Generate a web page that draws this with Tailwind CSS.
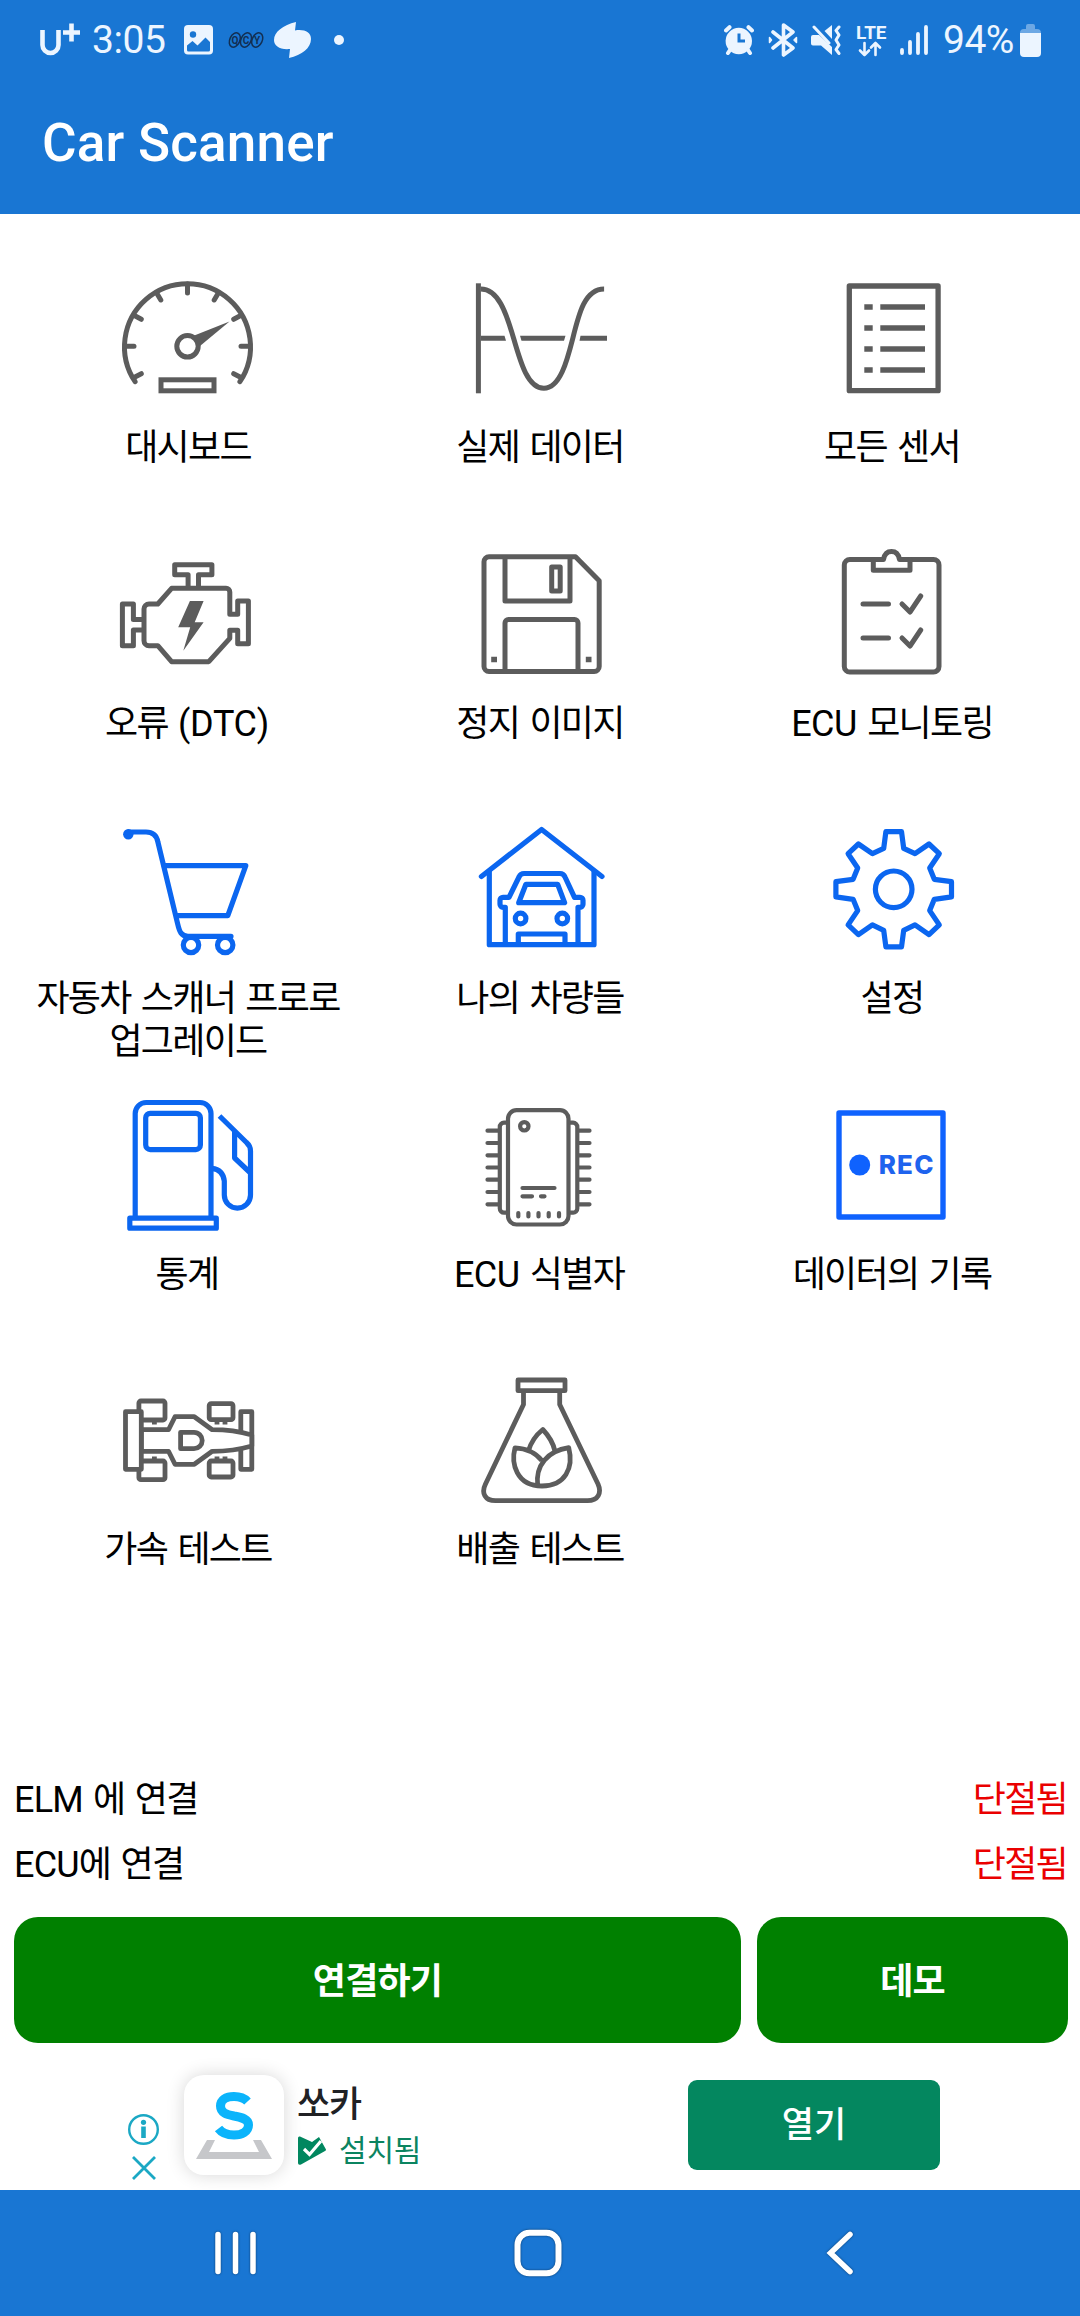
<!DOCTYPE html>
<html lang="ko">
<head>
  <meta charset="UTF-8" />
  <meta name="viewport" content="width=device-width, initial-scale=1.0"/>
  <title>Car Scanner</title>
  <script src="https://cdn.jsdelivr.net/npm/@tailwindcss/browser@4"></script>
</head>
<body class="bg-white text-black font-[Roboto,'Noto_Sans_CJK_KR',sans-serif]">
  <div class="w-[1080px] h-[2316px] flex flex-col overflow-hidden">

    <!-- Header -->
    <header class="h-[214px] shrink-0 bg-[#1976d3] text-white">
      <!-- Status bar -->
      <div class="h-20 pl-10 pr-[39px] flex items-center justify-between text-[#ecf5ff]">
        <div class="flex items-center">
          <svg class="w-[41px] h-9" viewBox="0 0 41 36" fill="none" stroke="currentColor">
            <path d="M2.5 8V23a8 8 0 0 0 16 0V8" stroke-width="4.6"/>
            <path d="M23 10.5H40M31.5 1.5V19.500" stroke-width="4.6"/>
          </svg>
          <span class="ml-[11px] w-[75px] text-[39px] leading-none tracking-[-0.4px]">3:05</span>
          <svg class="ml-[17px] w-[30px] h-[30px]" viewBox="0 0 30 30">
            <rect width="29" height="29.500" rx="4" fill="currentColor"/>
            <circle cx="9" cy="9.500" r="3.200" fill="#1976d3"/>
            <path d="M3 20.500L8.500 16l5 4.500L21.500 12.500L26 17V25a1.500 1.500 0 0 1-1.500 1.500H4.500A1.500 1.500 0 0 1 3 25Z" fill="#1976d3"/>
          </svg>
          <svg class="ml-[14px] w-9 h-[18px]" viewBox="0 0 36 18" fill="none" stroke="#132f52" stroke-width="1.500">
            <ellipse cx="6.800" cy="9" rx="5" ry="7.500" transform="rotate(25 6.800 9)"/>
            <ellipse cx="18" cy="9" rx="5" ry="7.500" transform="rotate(25 18 9)"/>
            <ellipse cx="29.200" cy="9" rx="5" ry="7.500" transform="rotate(25 29.200 9)"/>
            <g fill="#132f52" stroke="none" font-size="10" font-weight="700" text-anchor="middle">
              <text x="7" y="12.500">Q</text><text x="18" y="12.500">C</text><text x="29" y="12.500">Y</text>
            </g>
          </svg>
          <svg class="ml-[10px] w-[38px] h-[36px]" viewBox="0 0 38 36" fill="currentColor">
            <path d="M22 0C9 3 0 10 0 18C0 24 6 28 16 27L15 36C28 33 37 26 37 17C37 10 30 7 21 8.500Z"/>
          </svg>
          <span class="ml-[22px] size-[10px] rounded-full bg-current"></span>
        </div>

        <div class="flex items-center">
          <svg class="w-[30px] h-[30px]" viewBox="0 0 30 30">
            <circle cx="14.800" cy="16" r="13.200" fill="currentColor"/>
            <path d="M2 5.500L5.500 2.200M28 5.500L24.500 2.200M6 25L4 28M24 25L26 28" stroke="currentColor" stroke-width="4" stroke-linecap="round"/>
            <path d="M15 8.500V16H21" stroke="#1976d3" stroke-width="3" fill="none"/>
          </svg>
          <svg class="ml-[14px] w-[30px] h-[34px]" viewBox="0 0 30 34" fill="none" stroke="currentColor" stroke-width="3.600" stroke-linejoin="round" stroke-linecap="round">
            <path d="M5 9L25 25L15.500 32V2L25 9L5 25"/>
            <path d="M1.500 14.500V19.500L3.500 17ZM28.500 14.500V19.500L26 17Z" stroke-width="1.500" fill="currentColor"/>
          </svg>
          <svg class="ml-[13px] w-[30px] h-[30px]" viewBox="0 0 30 30" fill="currentColor">
            <path d="M2 10H8L21 22V30L10 20.500H2A2 2 0 0 1 0 18.500V12A2 2 0 0 1 2 10Z"/>
            <path d="M13.500 6L21 0V14Z"/>
            <path d="M3 2L18 18" stroke="currentColor" stroke-width="3" stroke-linecap="round"/>
            <path d="M28 2L25 5.500L28 10L25 15L28 20L25 24.500L28 28.500" fill="none" stroke="currentColor" stroke-width="3" stroke-linecap="round" stroke-linejoin="round"/>
          </svg>
          <svg class="ml-[14px] w-[34px] h-[34px]" viewBox="0 -2 34 34" fill="none" stroke="currentColor" stroke-width="2.600" stroke-linecap="round" stroke-linejoin="round">
            <text x="1" y="14" font-size="19" font-weight="700" fill="currentColor" stroke="none" textLength="30.500" lengthAdjust="spacingAndGlyphs">LTE</text>
            <path d="M9.500 18V30M5 25.500L9.500 30L14 25.500M20.500 30V18M16 22.500L20.500 18L25 22.500"/>
          </svg>
          <svg class="ml-[11px] w-[28px] h-[30px]" viewBox="0 0 28 30" stroke="currentColor" stroke-width="3.800" stroke-linecap="round">
            <path d="M2 25V28M10 17V28M18 9V28M26 2V28"/>
          </svg>
          <span class="ml-[15px] text-[39px] leading-none w-[72px] tracking-[-0.5px]">94%</span>
          <svg class="ml-[5px] w-[21px] h-[33px]" viewBox="0 0 21 33" fill="currentColor">
            <path d="M6 5V2a2 2 0 0 1 2-2h5a2 2 0 0 1 2 2V5h2a4 4 0 0 1 4 4H0a4 4 0 0 1 4-4Z" opacity=".4"/>
            <path d="M0 9H21V29a4 4 0 0 1-4 4H4a4 4 0 0 1-4-4Z"/>
          </svg>
        </div>
      </div>
      <h1 class="pl-[42px] pt-[32px] text-[53px] leading-[62px] font-medium tracking-[0.2px]">Car Scanner</h1>
    </header>

    <!-- Menu -->
    <main class="h-[1528px] shrink-0 px-3 pt-[55px] grid grid-cols-3 auto-rows-[275.6px] content-start text-center text-4xl leading-[43px] tracking-[-1.7px] [word-spacing:3px] text-black">

      <a class="flex flex-col items-center">
        <svg class="size-[140px]" viewBox="0 0 140 140" fill="none" stroke="#5c5c5c" stroke-width="5" stroke-linecap="round">
          <path d="M17.100 112.700A63 63 0 1 1 121.900 112.700"/>
          <path d="M69.500 15V24M38.500 23.700L42.800 31M100.500 23.700L96.200 31M15.900 46.300L23.300 50.300M123.100 46.300L115.700 50.300M7.500 77.300H16M131.500 77.300H123M16 108.500L23.300 104.700M123 108.500L115.700 104.700"/>
          <circle cx="69.500" cy="77.300" r="10.700"/>
          <path d="M75 67L111.500 52.500L82 77Z" fill="#5c5c5c" stroke="none"/>
          <rect x="43" y="110.800" width="53" height="11"/>
        </svg>
        <span class="mt-[18px]">대시보드</span>
      </a>

      <a class="flex flex-col items-center">
        <svg class="size-[140px]" viewBox="0 0 140 140" fill="none" stroke="#5c5c5c" stroke-width="5">
          <path d="M8.400 14.300V124.300"/>
          <path d="M10.800 20C28 20 36 43 43.600 69.300C51 95 58 119.300 73.900 119.300C90 119.300 97 92 102.800 69.300C109 44 115 20 134.100 20"/>
          <path d="M10.800 66.800H34.500L36 71.800H10.800ZM50 66.800H95.500L94 71.800H51.500ZM110.500 66.800H137V71.800H109.500Z" fill="#5c5c5c" stroke="none"/>
        </svg>
        <span class="mt-[18px]">실제 데이터</span>
      </a>

      <a class="flex flex-col items-center">
        <svg class="size-[140px]" viewBox="0 0 140 140" fill="none" stroke="#5c5c5c" stroke-width="5.300">
          <rect x="27.300" y="17" width="88.800" height="104.700" stroke-linejoin="round"/>
          <path d="M42.300 38H50.700M58.300 38H103M42.300 59H50.700M58.300 59H103M42.300 80H50.700M58.300 80H103M42.300 101H50.700M58.300 101H103"/>
        </svg>
        <span class="mt-[18px]">모든 센서</span>
      </a>

      <a class="flex flex-col items-center">
        <svg class="size-[140px]" viewBox="0 0 140 140" fill="none" stroke="#5c5c5c" stroke-width="5" stroke-linejoin="round">
          <path d="M70.100 42V29.700H56.700V19.700H93.900V29.700H80.500V42"/>
          <path d="M53.600 43.300H108A3.800 3.800 0 0 1 111.800 47V69.300H119.700V56H130.400V98.700H119.700V85.300H111.800V93.300L90.800 116.700H53.600L39.800 100.700H31A5 5 0 0 1 26 95.700V64A5 5 0 0 1 31 59H39.800Z"/>
          <path d="M26 74.500H15.400V59H4.400V100.700H15.400V85H26"/>
          <path d="M71.900 56H85.600L76.700 77.300H85.600L65.300 105.700L72.200 82.300H60.200Z" fill="#5c5c5c" stroke="none"/>
        </svg>
        <span class="mt-[18px] pr-0.5">오류 <span class="tracking-[-0.3px]">(DTC)</span></span>
      </a>

      <a class="flex flex-col items-center">
        <svg class="size-[140px]" viewBox="0 0 140 140" fill="none" stroke="#5c5c5c" stroke-width="5" stroke-linejoin="round">
          <path d="M19 11.700H105.500L129.200 35.700V121.500A5 5 0 0 1 124.200 126.500H19A5 5 0 0 1 14 121.500V16.700A5 5 0 0 1 19 11.700Z"/>
          <path d="M35 11.700V56H100V11.700M35 126.500V78A3.500 3.500 0 0 1 38.500 74.500H104.500A3.500 3.500 0 0 1 108 78V126.500"/>
          <rect x="81.700" y="22" width="8.500" height="24"/>
          <path d="M21.200 111.700H27V117.200H21.200ZM115.800 111.700H121.500V117.200H115.800Z" fill="#5c5c5c" stroke="none"/>
        </svg>
        <span class="mt-[18px]">정지 이미지</span>
      </a>

      <a class="flex flex-col items-center">
        <svg class="size-[140px]" viewBox="0 0 140 140" fill="none" stroke="#5c5c5c" stroke-width="5" stroke-linecap="round" stroke-linejoin="round">
          <path d="M61.500 14.500H28A5.500 5.500 0 0 0 22.300 20V121.500A5.500 5.500 0 0 0 28 127H111.500A5.500 5.500 0 0 0 117 121.500V20A5.500 5.500 0 0 0 111.500 14.500H77.500C76.500 9 74 6.600 69.500 6.600C65 6.600 62.500 9 61.500 14.500Z"/>
          <path d="M51.300 15V25.300H88V15M41 59H66.500M41 93H66.500M80 59L88 67L98.700 51M80 93L88 101L98.700 85"/>
        </svg>
        <span class="mt-[18px]"><span class="tracking-[-0.5px]">ECU</span> 모니토링</span>
      </a>

      <a class="flex flex-col items-center">
        <svg class="size-[140px]" viewBox="0 0 140 140" fill="none" stroke="#0b66f0" stroke-width="5.200" stroke-linejoin="round" stroke-linecap="round">
          <circle cx="10.300" cy="14.300" r="5.200" fill="#0b66f0" stroke="none"/>
          <path d="M10.300 12H28C35 12 38.500 15 39.800 21.700L59.700 104C61.500 112 63.500 116.300 70 116.300H113"/>
          <path d="M46.200 45.700H127.800L109.800 95.700H58.500"/>
          <circle cx="73" cy="125" r="7.700"/>
          <circle cx="107.200" cy="125" r="7.700"/>
        </svg>
        <span class="mt-[18px]">자동차 스캐너 프로로<br>업그레이드</span>
      </a>

      <a class="flex flex-col items-center">
        <svg class="size-[140px]" viewBox="0 0 140 140" fill="none" stroke="#0b66f0" stroke-width="5.200" stroke-linejoin="round">
          <path d="M11.400 56.500L71.600 9.500L132 56.500" stroke-linecap="round"/>
          <path d="M19.300 51V124.700H124V51"/>
          <path d="M35.300 124.700V87.300H33A3 3 0 0 1 30 84.300V80.300A3 3 0 0 1 33 77.300H39L49 57Q50.500 53.500 54 53.500H90Q93.500 53.500 95 57L104.500 77.300H110A3 3 0 0 1 113 80.300V84.300A3 3 0 0 1 110 87.300H108V124.700"/>
          <path d="M55.900 64.300H87.700L94.600 82.700H48.700ZM48.300 124.700V114H95V124.700"/>
          <circle cx="50.600" cy="98.500" r="5.300"/>
          <circle cx="92.300" cy="98.500" r="5.300"/>
        </svg>
        <span class="mt-[18px]">나의 차량들</span>
      </a>

      <a class="flex flex-col items-center">
        <svg class="size-[140px]" viewBox="0 0 140 140" fill="none" stroke="#0b66f0" stroke-width="5.200">
          <circle cx="71.700" cy="69.300" r="18.300"/>
          <path d="M63.900 11.700H79.500L81.700 28.300L93 33.700L107 24L117.300 33.700L107.700 48L112.300 59.300L129.500 61.700V76.900L112.300 79.300L107.700 90.600L117.300 104.900L107 114.600L93 104.900L81.700 110.300L79.500 126.900H63.900L61.700 110.300L50.400 104.900L36.400 114.600L26.100 104.900L35.700 90.600L31.100 79.300L13.900 76.900V61.700L31.100 59.300L35.700 48L26.100 33.700L36.400 24L50.400 33.700L61.700 28.300Z" stroke-linejoin="round"/>
        </svg>
        <span class="mt-[18px]">설정</span>
      </a>

      <a class="flex flex-col items-center">
        <svg class="size-[140px]" viewBox="0 0 140 140" fill="none" stroke="#0b66f0" stroke-width="5.200" stroke-linejoin="round">
          <path d="M17.200 122V17.500A11 11 0 0 1 28.200 6.500H82A11 11 0 0 1 93 17.500V122"/>
          <rect x="27.700" y="17.300" width="54.700" height="36.300" rx="4.500"/>
          <rect x="11.800" y="122.200" width="86.500" height="10"/>
          <path d="M101.500 20L128.500 46.500Q132.500 50 132.500 55V99A13 13 0 0 1 106.300 99V85Q105 73.500 94 72.300M116.600 35V62L132.500 77"/>
        </svg>
        <span class="mt-[18px] pr-0.5">통계</span>
      </a>

      <a class="flex flex-col items-center">
        <svg class="size-[140px]" viewBox="0 0 140 140" fill="none" stroke="#5c5c5c" stroke-width="4.200" stroke-linecap="round">
          <rect x="38" y="14.200" width="60.500" height="114.300" rx="8.500"/>
          <path d="M36 26.700H34A4.200 4.200 0 0 0 29.800 31V112.500A4.200 4.200 0 0 0 34 116.700H36M100.500 26.700H103A4.200 4.200 0 0 1 107.300 31V112.500A4.200 4.200 0 0 1 103 116.700H100.500"/>
          <path d="M17.500 34.700H28M17.500 47H28M17.500 59.300H28M17.500 71.500H28M17.500 83.700H28M17.500 96H28M17.500 108.300H28M109 34.700H119.500M109 47H119.500M109 59.300H119.500M109 71.500H119.500M109 83.700H119.500M109 96H119.500M109 108.300H119.500"/>
          <circle cx="54.300" cy="30.300" r="4.200"/>
          <path d="M52.500 92H84.500M52.500 100.300H62M71 100.300H74.500M48.300 117V120.500M58.400 117V120.500M68.500 117V120.500M78.700 117V120.500M89 117V120.500"/>
        </svg>
        <span class="mt-[18px] pr-0.5"><span class="tracking-[-0.5px]">ECU</span> 식별자</span>
      </a>

      <a class="flex flex-col items-center">
        <svg class="size-[140px]" viewBox="0 0 140 140">
          <rect x="17" y="17" width="104" height="104" fill="none" stroke="#0f62fe" stroke-width="5.400" stroke-linejoin="round"/>
          <circle cx="37.700" cy="69" r="10.500" fill="#0f62fe"/>
          <text class="tracking-[1.2px]" x="56.700" y="78.300" font-family="Inter" font-size="25.500" font-weight="800" fill="#1e63ee" textLength="56" lengthAdjust="spacingAndGlyphs">REC</text>
        </svg>
        <span class="mt-[18px]">데이터의 기록</span>
      </a>

      <a class="flex flex-col items-center">
        <svg class="size-[140px]" viewBox="0 0 140 140" fill="none" stroke="#5c5c5c" stroke-width="4.800" stroke-linejoin="round">
          <rect x="20.900" y="30" width="26.100" height="19" rx="2"/>
          <rect x="20.900" y="90" width="26.100" height="18.700" rx="2"/>
          <rect x="91.200" y="32.700" width="23.800" height="16" rx="2"/>
          <rect x="91.200" y="90" width="23.800" height="16" rx="2"/>
          <rect x="122.800" y="40.700" width="11" height="57.600"/>
          <path d="M23.300 58.700H50.500L57 45.700H76.300L94.200 58.700C108 58.700 120 60 133.800 64V75C120 79 108 80.300 94.200 80.300L76.300 93.300H57L50.500 80.300H23.300Z" fill="#fff"/>
          <rect x="7.500" y="40.700" width="15.800" height="57.600" fill="#fff"/>
          <path d="M62.600 61.300H76A8 8 0 0 1 76 77.700H62.600Z"/>
          <path d="M36.400 50V53.500M99 50V53.500M107 50V53.500M36.400 89V85.500M99 89V85.500M107 89V85.500"/>
        </svg>
        <span class="mt-[18px]">가속 테스트</span>
      </a>

      <a class="flex flex-col items-center">
        <svg class="size-[140px]" viewBox="0 0 140 140" fill="none" stroke="#5c5c5c" stroke-width="4.800" stroke-linejoin="round">
          <rect x="48" y="9" width="47" height="10.700"/>
          <path d="M53.500 21V33.500L15.500 113C11 122 15 129.700 25.500 129.700H117.500C128 129.700 132 122 128 113L89.700 33.500V21"/>
          <path d="M58.400 80C61 71 66 64 72.800 58.500C78 64 83 71 84.900 80"/>
          <path d="M71.800 89.500C65 81 56 77.500 45 76.900C41 92 46 115 72 115C95 115 104 97 98.700 76.700C78 80 65 94 67.700 115"/>
        </svg>
        <span class="mt-[18px]">배출 테스트</span>
      </a>
    </main>

    <!-- Connection status -->
    <section class="h-[175px] shrink-0 pl-[14px] pr-[13px] pt-[26px] text-4xl leading-[65px] tracking-[-1.7px] [word-spacing:3px]">
      <div class="flex justify-between h-[65px]">
        <span><span class="tracking-[-0.8px]">ELM</span> 에 연결</span>
        <span class="text-[#ea0000]">단절됨</span>
      </div>
      <div class="flex justify-between h-[65px]">
        <span><span class="tracking-[-0.8px]">ECU</span>에 연결</span>
        <span class="text-[#ea0000]">단절됨</span>
      </div>
    </section>

    <div class="h-[126px] shrink-0 pl-[14px] pr-3 flex gap-4 text-white text-4xl font-bold tracking-[-0.8px]">
      <button class="w-[727px] pt-[3px] rounded-3xl bg-[#008000]">연결하기</button>
      <button class="flex-1 pt-[3px] rounded-3xl bg-[#008000]">데모</button>
    </div>

    <!-- Ad banner -->
    <aside class="h-[147px] shrink-0 flex pl-[128px]">
      <div class="w-[31px] pt-[71px] flex flex-col items-center gap-[11px]">
        <svg class="size-[31px]" viewBox="0 0 31 31" fill="none" stroke="#1ba8c4">
          <circle cx="15.500" cy="15.500" r="14.300" stroke-width="2.400"/>
          <circle cx="15.500" cy="8.300" r="2.600" fill="#1ba8c4" stroke="none"/>
          <path d="M15.500 12.500V24" stroke-width="4.600"/>
        </svg>
        <svg class="size-6" viewBox="0 0 24 24" stroke="#1ba8c4" stroke-width="2.800">
          <path d="M1 1L23 23M23 1L1 23"/>
        </svg>
      </div>
      <div class="ml-[25px] mt-[32px] size-[100px] rounded-[20px] bg-white shadow-[0_0_18px_rgba(0,0,0,0.16)]">
        <svg class="size-[100px]" viewBox="0 0 100 100">
          <path d="M23 65H31L25 77H75L69 65H77L88 84H12Z" fill="#c6c7ca"/>
          <path d="M63.500 26.500C60 22.800 55.500 21.500 50 21.500C42 21.500 36.500 25 36.500 31C36.500 38 43 39.500 50 41C58 42.500 64.500 44 64.500 50C64.500 56.500 58 60 50 60C42 60 37.500 57.500 34.500 53.500" fill="none" stroke="#0bb4fb" stroke-width="9"/>
        </svg>
      </div>
      <div class="ml-[13px] w-[391px] pt-[39px]">
        <p class="text-[36px] leading-[46px] font-medium tracking-[-1.2px] text-[#202124]">쏘카</p>
        <p class="flex items-center text-[30px] leading-[46px] tracking-[-0.2px] text-[#0b8460]">
          <svg class="ml-px w-7 h-[30px] mr-[13px]" viewBox="0 0 28 30">
            <path d="M0 2Q0 0 2 .5L14 6L21 1L28 13.500Q28 14.500 27 15L3 28.500Q0 29.500 0 27Z" fill="#01875f"/>
            <path d="M6 13L11.500 18.500L23 5" fill="none" stroke="#fff" stroke-width="3.200"/>
          </svg>
          설치됨
        </p>
      </div>
      <button class="mt-[37px] w-[252px] h-[90px] pt-0.5 rounded-[9px] bg-[#04875f] text-white text-[35px] font-medium">열기</button>
    </aside>

    <!-- Navigation bar -->
    <nav class="h-[126px] shrink-0 bg-[#1976d3] flex items-center pl-[211px] text-white">
      <svg class="w-[50px] h-[50px] drop-shadow-[0_0_1px_rgba(0,0,0,0.5)]" viewBox="0 0 50 50" stroke="currentColor" stroke-width="5.500" stroke-linecap="round">
        <path d="M7 6.500V43.500M24.500 6.500V43.500M42 6.500V43.500"/>
      </svg>
      <svg class="ml-[252px] w-[50px] h-[50px] drop-shadow-[0_0_1px_rgba(0,0,0,0.5)]" viewBox="0 0 50 50" fill="none" stroke="currentColor" stroke-width="6">
        <rect x="4.500" y="4.800" width="41" height="40.500" rx="12"/>
      </svg>
      <svg class="ml-[252px] w-[50px] h-[50px] drop-shadow-[0_0_1px_rgba(0,0,0,0.5)]" viewBox="0 0 50 50" fill="none" stroke="currentColor" stroke-width="5.500" stroke-linecap="round">
        <path d="M35 6.500L15.500 25L35 43.500"/>
      </svg>
    </nav>
  </div>
</body>
</html>
